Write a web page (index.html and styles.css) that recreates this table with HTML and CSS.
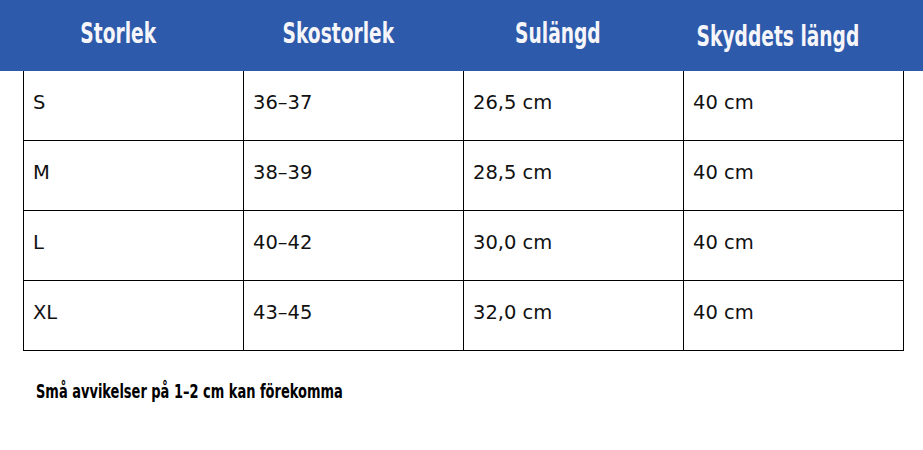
FILE: index.html
```html
<!DOCTYPE html>
<html lang="sv">
<head>
<meta charset="utf-8">
<title>Storlekstabell</title>
<link rel="stylesheet" href="styles.css">
</head>
<body>
<div class="head">
  <div class="hcell"><span class="htxt">Storlek</span></div>
  <div class="hcell"><span class="htxt">Skostorlek</span></div>
  <div class="hcell"><span class="htxt">Sulängd</span></div>
  <div class="hcell hlow"><span class="htxt">Skyddets längd</span></div>
</div>
<div class="grid">
  <div class="cell">S</div><div class="cell">36–37</div><div class="cell">26,5 cm</div><div class="cell">40 cm</div>
  <div class="cell">M</div><div class="cell">38–39</div><div class="cell">28,5 cm</div><div class="cell">40 cm</div>
  <div class="cell">L</div><div class="cell">40–42</div><div class="cell">30,0 cm</div><div class="cell">40 cm</div>
  <div class="cell">XL</div><div class="cell">43–45</div><div class="cell">32,0 cm</div><div class="cell">40 cm</div>
</div>
<p class="note"><span class="ntxt">Små avvikelser på 1–2 cm kan förekomma</span></p>
</body>
</html>
```
FILE: styles.css
```css
html, body {
  margin: 0;
  padding: 0;
  background: #ffffff;
}
body {
  width: 923px;
  height: 450px;
  overflow: hidden;
}
.head {
  height: 71px;
  background: #2d5aab;
  display: grid;
  grid-template-columns: repeat(4, 220px);
  padding-left: 8px;
  box-sizing: border-box;
}
.hcell {
  font-family: "DejaVu Sans Condensed", "DejaVu Sans", sans-serif;
  font-stretch: condensed;
  font-weight: bold;
  font-size: 28px;
  color: #f6f6fa;
  text-align: center;
  padding-top: 17px;
  line-height: 34px;
}
.hlow {
  padding-top: 20px;
}
.htxt {
  display: inline-block;
  transform: scaleX(0.74);
  transform-origin: center;
}
.grid {
  margin-left: 23px;
  width: 881px;
  border-left: 1px solid #000;
  display: grid;
  grid-template-columns: repeat(4, 220px);
  grid-auto-rows: 70px;
}
.cell {
  border-right: 1px solid #000;
  border-bottom: 1px solid #000;
  font-family: "DejaVu Sans", sans-serif;
  font-size: 19.5px;
  line-height: 23px;
  color: #111;
  padding: 20px 0 0 9px;
}
.note {
  margin: 29px 0 0 36px;
  font-family: "DejaVu Sans Condensed", "DejaVu Sans", sans-serif;
  font-stretch: condensed;
  font-weight: bold;
  font-size: 19px;
  line-height: 22px;
  color: #000;
}
.ntxt {
  display: inline-block;
  transform: scaleX(0.76);
  transform-origin: left center;
  white-space: nowrap;
}
```
